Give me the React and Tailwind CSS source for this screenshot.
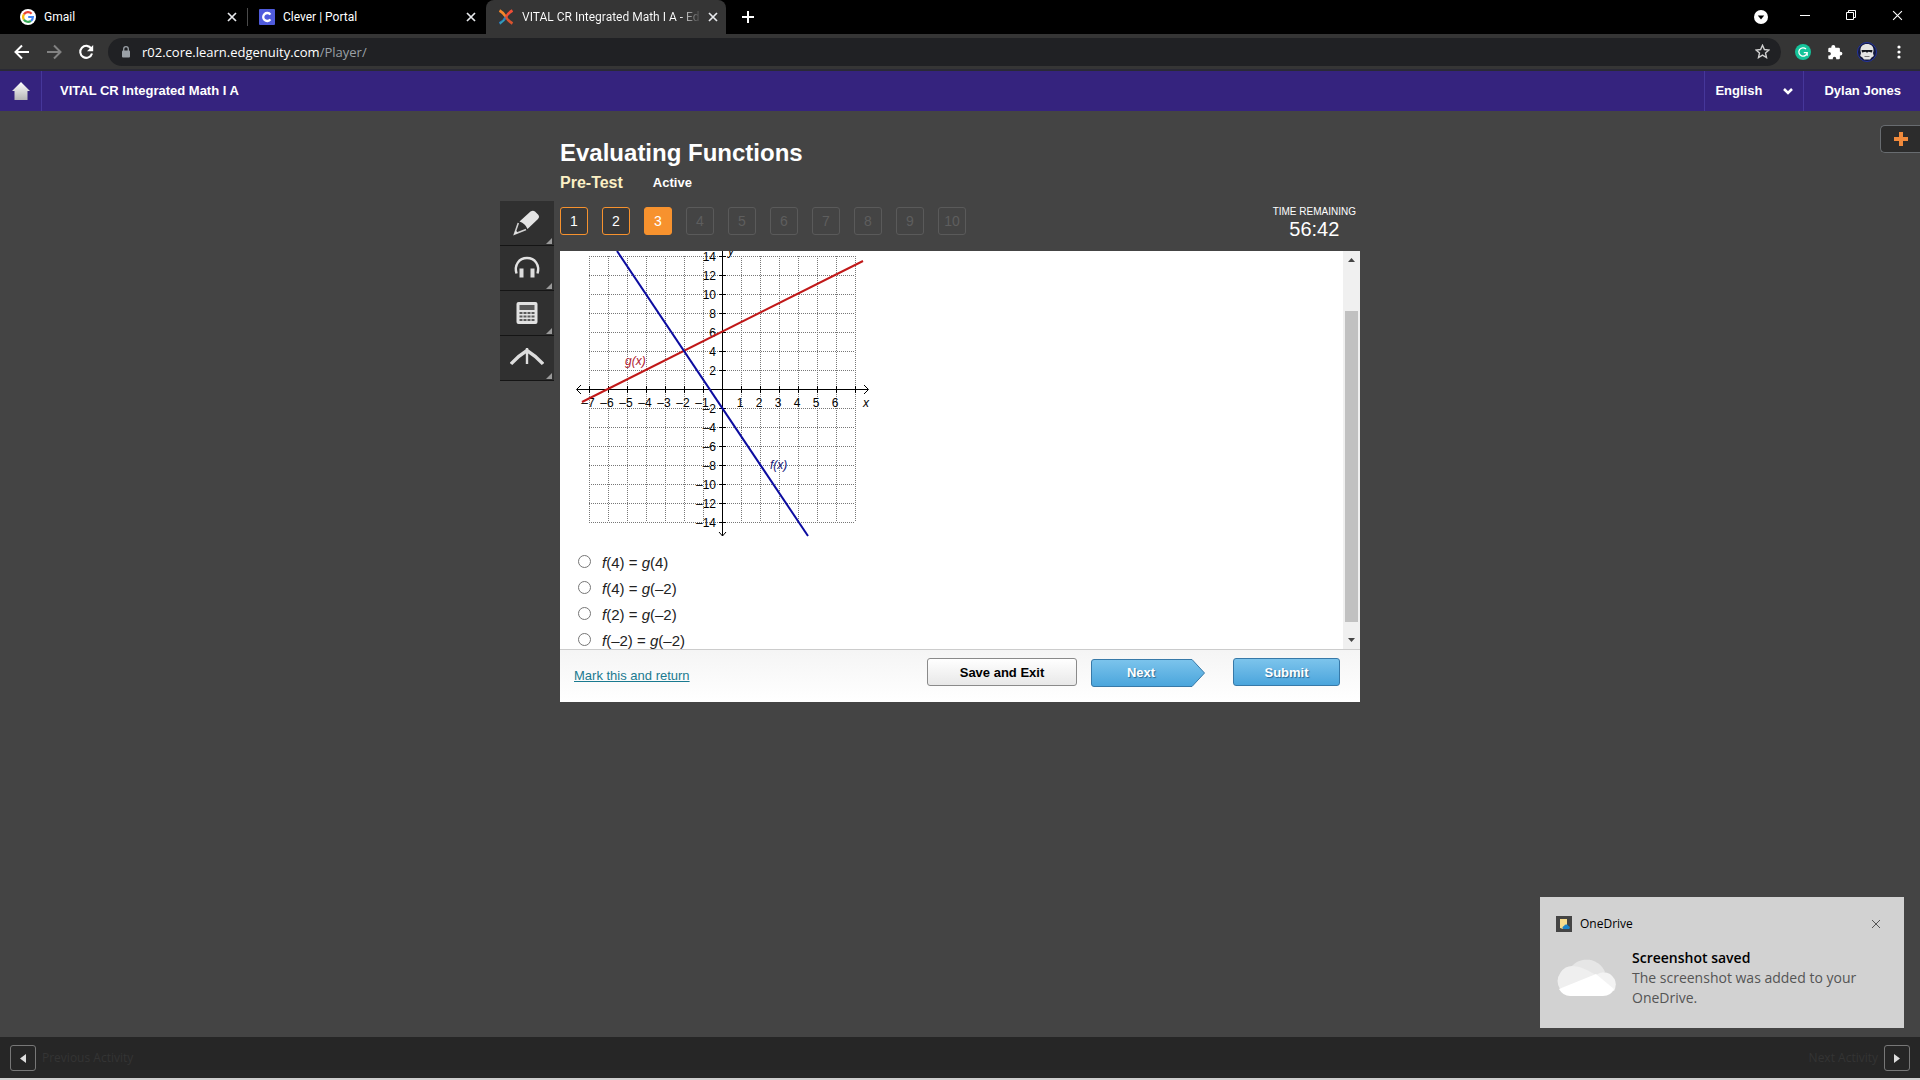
import React from 'react';

const questions = [1, 2, 3, 4, 5, 6, 7, 8, 9, 10];
const ticks = [-7, -6, -5, -4, -3, -2, -1, 0, 1, 2, 3, 4, 5, 6, 7];
const UNIT = 19;
const OX = 162;
const OY = 138;

const options = [
  { id: 'a', left: '(4)', right: '(4)' },
  { id: 'b', left: '(4)', right: '(–2)' },
  { id: 'c', left: '(2)', right: '(–2)' },
  { id: 'd', left: '(–2)', right: '(–2)' },
];

const CloseIcon = ({ className }) => (
  <svg className={className} viewBox="0 0 10 10" fill="none" stroke="currentColor">
    <path d="M1 1l8 8M9 1l-8 8" />
  </svg>
);

const GoogleIcon = () => (
  <svg className="size-4 shrink-0" viewBox="0 0 16 16" fill="none">
    <circle cx="8" cy="8" r="8" fill="#fff" />
    <g strokeWidth="2.2">
      <path d="M3.9 5.4A4.9 4.9 0 0 1 11.6 4.7" stroke="#ea4335" />
      <path d="M3.9 5.4A4.9 4.9 0 0 0 3.9 10.6" stroke="#fbbc05" />
      <path d="M3.9 10.6A4.9 4.9 0 0 0 11 11.8" stroke="#34a853" />
      <path d="M11 11.8A4.9 4.9 0 0 0 12.9 8H8.2" stroke="#4285f4" />
    </g>
  </svg>
);

const CleverIcon = () => (
  <svg className="size-4 shrink-0" viewBox="0 0 16 16" fill="none">
    <rect width="16" height="16" rx="1" fill="#4f5bdc" />
    <path d="M11.4 5.6A4 4 0 1 0 11.4 10.4" stroke="#fff" strokeWidth="2.3" />
  </svg>
);

const EdgenuityIcon = () => (
  <svg className="size-4 shrink-0" viewBox="0 0 16 16" fill="none" strokeWidth="2.6">
    <path d="M1.5 1.5Q6 4 8 8" stroke="#f6862a" />
    <path d="M14.5 1.5Q10 4 8 8" stroke="#f04e37" />
    <path d="M8 8Q6 12 1.5 14.5" stroke="#2a7fc0" />
    <path d="M8 8Q10 12 14.5 14.5" stroke="#d9532e" />
    <path d="M6 11Q4.500 13 2 14.500" stroke="#3bb3a9" strokeWidth="1" />
  </svg>
);

const TabClose = ({ label }) => (
  <button type="button" aria-label={label} className="ml-auto shrink-0 text-[#e8eaed]">
    <CloseIcon className="size-[10px] stroke-[1.7]" />
  </button>
);

const TabStrip = () => (
  <div className="flex h-[34px] bg-black text-white font-[Roboto,sans-serif] text-[12px] leading-4">
    <div className="flex w-[247px] items-center gap-2 pl-5 pr-[10px]">
      <GoogleIcon />
      <span>Gmail</span>
      <TabClose label="Close Gmail" />
    </div>
    <div className="my-2 w-px bg-[#4a4a4a]" />
    <div className="flex w-[238px] items-center gap-2 pl-[11px] pr-[10px]">
      <CleverIcon />
      <span>Clever | Portal</span>
      <TabClose label="Close Clever" />
    </div>
    <div className="flex w-[240px] items-center gap-2 rounded-t-lg bg-[#353535] pl-3 pr-[11px]">
      <EdgenuityIcon />
      <span className="whitespace-nowrap bg-linear-to-r from-white from-88% to-[#4a4a4a] bg-clip-text text-transparent">
        VITAL CR Integrated Math I A - Ed
      </span>
      <TabClose label="Close VITAL CR Integrated Math I A" />
    </div>
    <button type="button" aria-label="New tab" className="ml-4 self-center">
      <svg className="size-[12px]" viewBox="0 0 12 12" stroke="#fff" strokeWidth="2">
        <path d="M6 0v12M0 6h12" />
      </svg>
    </button>
    <div className="ml-auto flex items-center pb-1 pr-[17px]">
      <button type="button" aria-label="Search tabs" className="mt-1">
        <svg className="size-[14px]" viewBox="0 0 14 14">
          <circle cx="7" cy="7" r="7" fill="#fff" />
          <path d="M3.800 5.500h6.400L7 9.500z" fill="#000" />
        </svg>
      </button>
      <button type="button" aria-label="Minimize" className="ml-[32px]">
        <svg className="size-[10px]" viewBox="0 0 10 10" stroke="#fff">
          <path d="M0 5.500h10" />
        </svg>
      </button>
      <button type="button" aria-label="Restore" className="ml-[36px]">
        <svg className="size-[10px]" viewBox="0 0 10 10" fill="none" stroke="#fff">
          <path d="M.5 2.500h7v7h-7zM2.500 2.500v-2h7v7h-2" />
        </svg>
      </button>
      <button type="button" aria-label="Close window" className="ml-[36px] text-white">
        <CloseIcon className="size-[11px]" />
      </button>
    </div>
  </div>
);

const Toolbar = () => (
  <div className="flex h-[37px] items-center border-b-2 border-[#2a2a35] bg-[#353535] pl-[14px] pr-[19px]">
    <button type="button" aria-label="Back">
      <svg className="size-[16px]" viewBox="0 0 16 16" fill="none" stroke="#fff" strokeWidth="2">
        <path d="M15 8H2M8 1.500L1.500 8 8 14.500" />
      </svg>
    </button>
    <button type="button" aria-label="Forward" className="ml-4">
      <svg className="size-[16px]" viewBox="0 0 16 16" fill="none" stroke="#828282" strokeWidth="2">
        <path d="M1 8h13M8 1.500L14.500 8 8 14.500" />
      </svg>
    </button>
    <button type="button" aria-label="Reload" className="ml-4">
      <svg className="size-[16px]" viewBox="0 0 16 16" fill="none" stroke="#fff" strokeWidth="2.1">
        <path d="M13.300 4.600A6 6 0 1 0 14 9.500" />
        <path d="M15.200 1v6.300H9z" fill="#fff" stroke="none" />
      </svg>
    </button>
    <div className="ml-[14px] flex h-7 flex-1 items-center rounded-full bg-[#202124] pl-3 pr-[11px]">
      <svg className="size-[12px] shrink-0" viewBox="0 0 12 12" fill="none">
        <rect x="2" y="4.500" width="8" height="7" rx="1" fill="#9aa0a6" />
        <path d="M3.700 5V3a2.300 2.300 0 0 1 4.600 0v2" stroke="#9aa0a6" strokeWidth="1.300" />
      </svg>
      <p className="ml-[10px] text-[13px] leading-5 text-white">
        r02.core.learn.edgenuity.com<span className="text-[#9aa0a6]">/Player/</span>
      </p>
      <svg className="ml-auto size-[15px]" viewBox="0 0 15 15" fill="none" stroke="#d0d0d0" strokeWidth="1.400">
        <path d="M7.500 1.300l1.900 4.200 4.500.500-3.400 3 1 4.500-4-2.400-4 2.400 1-4.500-3.400-3 4.500-.500z" />
      </svg>
    </div>
    <svg className="ml-[14px] size-4" viewBox="0 0 16 16" fill="none">
      <circle cx="8" cy="8" r="8" fill="#15c39a" />
      <path d="M11 5A4.200 4.200 0 1 0 12.200 8.700H8.800M12.200 8.700v3" stroke="#fff" strokeWidth="1.300" />
    </svg>
    <svg className="ml-4 size-4" viewBox="0 0 16 16" fill="#fff">
      <path d="M6.300 1a2 2 0 0 1 2 2v.7h3.400a1.200 1.200 0 0 1 1.200 1.200V7.700h.6a1.900 1.900 0 0 1 0 3.800h-.6v2.600a1.200 1.200 0 0 1-1.200 1.200H9.200v-.9a1.700 1.700 0 0 0-3.400 0v.9H2.500a1.200 1.200 0 0 1-1.200-1.200v-2.700h.9a1.700 1.700 0 0 0 0-3.400h-.9V4.900a1.200 1.200 0 0 1 1.200-1.200h1.800V3a2 2 0 0 1 2-2z" />
    </svg>
    <svg className="ml-[14px] size-5" viewBox="0 0 20 20">
      <circle cx="10" cy="10" r="9.500" fill="#151a3c" stroke="#2333a0" />
      <path d="M3.500 9C3 4.500 6 2 10 2s7 2.500 6.500 7l-.5 2 .8 3-2.300 1.500-1.500 2H7l-1.500-2-2.300-1.500.8-3z" fill="#e4e4e4" />
      <path d="M4.500 8h11l-.5 2.500-3.500-.7-1.500 1-1.500-1-3.500.7z" fill="#15171f" />
      <path d="M7.500 14h5v1h-5z" fill="#777" />
    </svg>
    <svg className="ml-[20px] h-4 w-1" viewBox="0 0 4 16" fill="#fff">
      <circle cx="2" cy="3" r="1.600" />
      <circle cx="2" cy="8" r="1.600" />
      <circle cx="2" cy="13" r="1.600" />
    </svg>
  </div>
);

const CourseBar = () => (
  <header className="flex h-10 items-stretch bg-[#35237e] font-['Liberation_Sans',Arial,sans-serif] text-[13px] font-bold text-white">
    <a href="#home" aria-label="Home" className="flex w-[42px] items-center justify-center border-r border-[#46379a]">
      <svg className="h-[18px] w-[18px]" viewBox="0 0 18 18">
        <defs>
          <linearGradient id="home" x1="0" y1="0" x2="0" y2="1">
            <stop offset="0" stopColor="#fff" />
            <stop offset="1" stopColor="#b5b5b5" />
          </linearGradient>
        </defs>
        <path d="M9 0l9 9h-2.500v9h-13V9H0z" fill="url(#home)" />
      </svg>
    </a>
    <h1 className="flex items-center pl-[18px]">VITAL CR Integrated Math I A</h1>
    <label className="relative ml-auto flex items-center border-l border-[#46379a]">
      <select aria-label="Language" className="h-10 w-[98px] appearance-none bg-transparent pl-[10px]" defaultValue="English">
        <option>English</option>
      </select>
      <svg className="pointer-events-none absolute right-[10px] size-[10px]" viewBox="0 0 10 10" fill="none" stroke="#fff" strokeWidth="2.500">
        <path d="M1 3l4 4 4-4" />
      </svg>
    </label>
    <button type="button" className="border-l border-[#46379a] pl-5 pr-[19px] font-bold">Dylan Jones</button>
  </header>
);

const ToolButton = ({ label, children }) => (
  <button
    type="button"
    aria-label={label}
    className="relative flex h-[45px] w-[54px] items-center justify-center border-b border-[#151515] bg-[#303030]"
  >
    <svg className="h-[28px] w-[34px]" viewBox="0 0 34 28" fill="none">
      {children}
    </svg>
    <svg className="absolute bottom-px right-[2px] size-[6px]" viewBox="0 0 6 6" fill="#9a9a9a">
      <path d="M6 0v6H0z" />
    </svg>
  </button>
);

const Tools = () => (
  <aside className="mt-[90px] w-[60px] shrink-0">
    <ToolButton label="Highlighter">
      <path d="M9.500 12.500L20.500 2.500Q23 .8 25 2.500L28.500 6Q30 8 28 10L17.500 20Q15.500 14.500 9.500 12.500z" fill="#e4e4e4" />
      <path d="M8.300 14L4.500 25 16 20.500" stroke="#d0d0d0" strokeWidth="1.600" />
      <path d="M5.800 21.500L8 24l-4 1.500z" fill="#e4e4e4" />
    </ToolButton>
    <ToolButton label="Read aloud">
      <path d="M6.500 19.500C4 11 9 4 17 4s13 7 10.500 15.500" stroke="#e2e2e2" strokeWidth="2.400" />
      <path d="M9.500 14.500h4v9h-4zM20.500 14.500h4v9h-4z" fill="#dcdcdc" />
    </ToolButton>
    <ToolButton label="Calculator">
      <rect x="6.500" y="3" width="21" height="22" rx="2" fill="#e2e2e2" />
      <path d="M9.500 6h15v5h-15z" fill="#5a5a5a" />
      <path d="M9.500 14h15M9.500 17.500h15M9.500 21h15" stroke="#5a5a5a" strokeWidth="2" strokeDasharray="3 1" />
    </ToolButton>
    <ToolButton label="Reference sheet">
      <path d="M1 20Q8 12 17 6.500Q26 12 33 20" stroke="#ddd" strokeWidth="3.400" />
      <path d="M17 4v16" stroke="#ddd" strokeWidth="2.400" />
    </ToolButton>
  </aside>
);

const questionClass = (n) => {
  if (n === 3) return 'border-[#f7922e] bg-[#f7922e] text-white';
  if (n < 3) return 'border-[#f7922e] bg-[#3a3a3a] text-white';
  return 'border-[#5a5a5a] text-[#5e5e5e]';
};

const Graph = () => (
  <svg className="block h-[290px] w-[320px] font-['Liberation_Sans',Arial,sans-serif] text-[12px]" viewBox="0 0 320 290" fill="none" role="img" aria-label="Graph of f(x) and g(x)">
    {ticks.map((t) => (
      <g key={t}>
        <path d={`M${OX + t * UNIT + 0.5} 5V271M29 ${OY + t * UNIT + 0.5}H295`} stroke="#777" strokeDasharray="1 1" />
        <path d={`M${OX + t * UNIT + 0.5} 135v7M159 ${OY + t * UNIT + 0.5}h7`} stroke="#000" />
      </g>
    ))}
    <path d="M17 138.500H308M162.500 0V285" stroke="#000" />
    <path d="M21 134l-4.500 4.500 4.500 4.500M304 134l4.500 4.500-4.500 4.500M159 281l3.500 4 3.500-4" stroke="#000" />
    <g fill="#000" textAnchor="middle">
      {ticks.filter((t) => t !== 0 && t !== 7).map((t) => (
        <text key={t} x={OX + t * UNIT - 1} y="156">{t < 0 ? `–${-t}` : t}</text>
      ))}
    </g>
    <g fill="#000" textAnchor="end">
      {ticks.filter((t) => t !== 0).map((t) => (
        <text key={t} x="156" y={OY - t * UNIT + 5}>{t < 0 ? `–${-t * 2}` : t * 2}</text>
      ))}
    </g>
    <path d="M22 151L303 10" stroke="#c01818" strokeWidth="2" />
    <path d="M57 0L248 285" stroke="#0c0ca0" strokeWidth="2" />
    <g fontStyle="italic">
      <text x="168" y="4" fill="#000">y</text>
      <text x="303" y="156" fill="#000">x</text>
      <text x="65" y="114" fill="#b02030">g(x)</text>
      <text x="210" y="218" fill="#20207a">f(x)</text>
    </g>
  </svg>
);

const Scrollbar = () => (
  <div className="flex w-[17px] shrink-0 flex-col items-center bg-[#f0f0f0]">
    <svg className="mt-[6px] h-[5px] w-[7px]" viewBox="0 0 7 5" fill="#444">
      <path d="M0 5l3.500-4L7 5z" />
    </svg>
    <div className="mt-[49px] h-[311px] w-[13px] bg-[#c1c1c1]" />
    <svg className="mb-[6px] mt-auto h-[5px] w-[7px]" viewBox="0 0 7 5" fill="#444">
      <path d="M0 0l3.500 4L7 0z" />
    </svg>
  </div>
);

const Assessment = () => (
  <main className="w-[800px] shrink-0">
    <h2 className="mt-[26px] text-[24px] font-bold leading-8">Evaluating Functions</h2>
    <div className="mt-1 flex items-center gap-[30px] leading-5">
      <span className="text-[16px] font-bold text-[#fbf0c4]">Pre-Test</span>
      <span className="text-[13px] font-bold">Active</span>
    </div>
    <div className="mt-[14px] flex justify-between">
      <nav className="flex gap-[14px]">
        {questions.map((n) => (
          <button key={n} type="button" className={`h-7 w-7 rounded-[3px] border text-[14px] ${questionClass(n)}`}>
            {n}
          </button>
        ))}
      </nav>
      <div className="-mt-[2px] h-[46px] pr-1 text-center">
        <p className="text-[10px] leading-[14px]">TIME REMAINING</p>
        <p className="text-[20px] leading-5">56:42</p>
      </div>
    </div>
    <div className="bg-white text-[#222]">
      <div className="flex h-[398px]">
        <div className="flex-1 overflow-hidden">
          <Graph />
          <form className="pl-[18px] pt-[9px]">
            {options.map((o) => (
              <label key={o.id} className="flex h-[26px] items-center text-[15px]">
                <input type="radio" name="answer" value={o.id} className="mb-1 mr-[11px] size-[13px] appearance-none rounded-full border border-[#767676] bg-white" />
                <span><i>f</i>{o.left} = <i>g</i>{o.right}</span>
              </label>
            ))}
          </form>
        </div>
        <Scrollbar />
      </div>
      <div className="flex h-[53px] items-start border-t border-[#ccc] bg-linear-to-b from-[#f5f5f5] to-white px-5 pl-[14px] pt-2">
        <a href="#mark" className="mt-2 text-[13px] leading-5 text-[#1a7a90] underline">Mark this and return</a>
        <button type="button" className="ml-auto h-7 w-[150px] rounded-[3px] border border-[#8a8a8a] bg-linear-to-b from-white to-[#e8e8e8] pt-[2px] text-[13px] font-bold text-black">
          Save and Exit
        </button>
        <button type="button" className="relative ml-[14px] mt-px h-7 w-[114px] pr-[14px] text-[13px] font-bold text-white text-shadow-[1px_1px_1px_#2a6a95]">
          <svg className="absolute inset-0 size-full" viewBox="0 0 114 28">
            <defs>
              <linearGradient id="next" x1="0" y1="0" x2="0" y2="1">
                <stop offset="0" stopColor="#7cc4ec" />
                <stop offset="1" stopColor="#4aa5dc" />
              </linearGradient>
            </defs>
            <path d="M3 .5H101L113.500 14 101 27.500H3Q.5 27.500.5 25V3Q.5.5 3 .5z" fill="url(#next)" stroke="#3779a8" />
          </svg>
          <span className="relative">Next</span>
        </button>
        <button type="button" className="ml-[28px] h-7 w-[107px] rounded-[3px] border border-[#3779a8] bg-linear-to-b from-[#7cc4ec] to-[#4aa5dc] pt-[2px] text-[13px] font-bold text-white text-shadow-[1px_1px_1px_#2a6a95]">
          Submit
        </button>
      </div>
    </div>
  </main>
);

const Toast = () => (
  <div className="absolute bottom-[52px] right-4 h-[131px] w-[364px] bg-[#d2d2d2] px-4 pt-[18px] text-black">
    <div className="flex items-center gap-2 text-[12px] leading-[18px]">
      <svg className="size-4" viewBox="0 0 16 16">
        <rect width="16" height="16" fill="#444" />
        <path d="M4 3h7v9l-4 1-3-1z" fill="#f7dc8c" />
        <path d="M7 13a2 2 0 0 1 1-3 2.500 2.500 0 0 1 4.500 0 1.600 1.600 0 0 1 .5 3z" fill="#1b83c9" />
      </svg>
      <span>OneDrive</span>
      <button type="button" aria-label="Dismiss" className="ml-auto mr-[7px] text-[#555]">
        <CloseIcon className="size-[10px]" />
      </button>
    </div>
    <div className="mt-[15px] flex gap-4">
      <svg className="mt-[9px] h-[40px] w-[60px] shrink-0" viewBox="0 0 60 40">
        <path d="M15 10A20 20 0 0 1 49 15L36 21z" fill="#e6e6e6" />
        <path d="M4 32A15 15 0 0 1 20 9.500Q26 9.500 40 18L30 26z" fill="#efefef" />
        <path d="M40 18Q47 13 54 17Q63 24 58 34L48 32 36 22z" fill="#f3f3f3" />
        <path d="M3 32L40 17 58 32Q55 39 47 39H14Q7 39 3 32z" fill="#fff" />
      </svg>
      <div className="text-[14px] leading-5">
        <p className="font-semibold">Screenshot saved</p>
        <p className="text-[#555]">The screenshot was added to your OneDrive.</p>
      </div>
    </div>
  </div>
);

const ActivityBar = () => (
  <footer className="flex h-[43px] items-center justify-between border-b-2 border-[#d0d0d0] bg-[#262626] px-[10px] pt-px text-[12px] text-[#343434]">
    <button type="button" className="flex items-center gap-[6px]">
      <span className="flex size-[26px] items-center justify-center rounded-[3px] border border-[#777]">
        <svg className="h-[9px] w-[6px]" viewBox="0 0 6 9" fill="#ddd"><path d="M6 0v9L0 4.500z" /></svg>
      </span>
      Previous Activity
    </button>
    <button type="button" className="flex items-center gap-[6px]">
      Next Activity
      <span className="flex size-[26px] items-center justify-center rounded-[3px] border border-[#777]">
        <svg className="h-[9px] w-[6px]" viewBox="0 0 6 9" fill="#ddd"><path d="M0 0v9l6-4.500z" /></svg>
      </span>
    </button>
  </footer>
);

const App = () => {
  return (
    <div className="relative flex min-h-screen flex-col bg-[#444] font-['Open_Sans','Noto_Sans',sans-serif]">
      <TabStrip />
      <Toolbar />
      <CourseBar />
      <div className="relative flex-1 font-['Liberation_Sans',Arial,sans-serif] text-white">
        <div className="mx-auto flex w-[920px]">
          <Tools />
          <Assessment />
        </div>
        <button type="button" aria-label="Open notes" className="absolute right-0 top-[14px] flex h-7 w-10 items-center justify-center rounded-l-[5px] border border-r-0 border-[#686c70] bg-[#2c2c2c]">
          <svg className="size-[14px]" viewBox="0 0 14 14" stroke="#f08a3c" strokeWidth="4">
            <path d="M7 0v14M0 7h14" />
          </svg>
        </button>
      </div>
      <Toast />
      <ActivityBar />
    </div>
  );
};

export default App;
